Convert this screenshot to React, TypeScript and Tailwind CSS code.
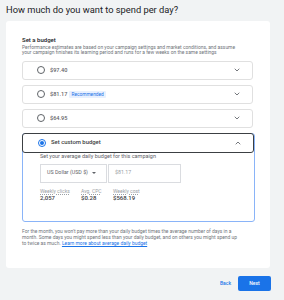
import React from "react";

const options = [
  { price: "$97.40", recommended: false },
  { price: "$81.17", recommended: true },
  { price: "$64.95", recommended: false },
];

function Chevron({ up }: { up?: boolean }) {
  return (
    <svg width="8" height="8" viewBox="0 0 24 24" className="text-[#5f6368]">
      <path
        d={up ? "M6 15l6-6 6 6" : "M6 9l6 6 6-6"}
        fill="none"
        stroke="currentColor"
        strokeWidth="2.6"
        strokeLinecap="round"
        strokeLinejoin="round"
      />
    </svg>
  );
}

export default function App() {
  return (
    <div
      className="w-[284px] h-[300px] bg-[#f1f3f4] overflow-hidden text-[#202124]"
      style={{ fontFamily: "Roboto, 'Liberation Sans', sans-serif" }}
    >
      <div className="pl-[6px] pt-[3px] h-[21px] text-[9.3px] leading-[14px] text-[#202124]">
        How much do you want to spend per day?
      </div>

      <div className="ml-[6px] w-[264px] h-[247px] bg-white rounded-[3px] pl-[16px] pr-[17px] pt-[15px]">
        <div className="text-[6px] leading-[8px] font-medium text-[#202124]">Set a budget</div>
        <p className="text-[4.95px] leading-[5.4px] text-[#70757a] mt-[1px] whitespace-nowrap">
          Performance estimates are based on your campaign settings and market conditions, and assume
          <br />
          your campaign finishes its learning period and runs for a few weeks on the same settings
        </p>

        {/* fixed options */}
        <div className="flex flex-col gap-[5px] mt-[5px]">
          {options.map((o) => (
            <div
              key={o.price}
              className="h-[19px] border border-[#e0e0e0] rounded-[3px] flex items-center pl-[14px] pr-[11px]"
            >
              <span className="w-[8px] h-[8px] rounded-full border border-[#5f6368]" />
              <span className="ml-[5px] text-[5.6px] font-medium text-[#5f6368]">{o.price}</span>
              {o.recommended && (
                <span className="ml-[2px] px-[2px] h-[7px] leading-[7px] bg-[#e8f0fe] text-[#1a73e8] text-[4.8px] rounded-[1px]">
                  Recommended
                </span>
              )}
              <span className="ml-auto">
                <Chevron />
              </span>
            </div>
          ))}
        </div>

        {/* custom budget */}
        <div className="mt-[5px] w-[233px] h-[89px] border border-[#8ab4f8] rounded-[3px]">
          <div className="-m-px h-[20px] w-[232px] border border-[#3c4043] rounded-[3px] flex items-center pl-[15px] pr-[11px] bg-white">
            <span className="w-[8px] h-[8px] rounded-full border border-[#1a73e8] flex items-center justify-center">
              <span className="w-[4px] h-[4px] rounded-full bg-[#1a73e8]" />
            </span>
            <span className="ml-[5px] text-[5.9px] font-medium text-[#3c4043]">Set custom budget</span>
            <span className="ml-auto">
              <Chevron up />
            </span>
          </div>

          <div className="pl-[17px] pt-[1px]">
            <div className="text-[5.5px] leading-[7px] text-[#5f6368]">
              Set your average daily budget for this campaign
            </div>
            <div className="flex gap-[1px] mt-[4px]">
              <div className="w-[67px] h-[19px] border border-[#dadce0] flex items-center pl-[6px] text-[5.3px] text-[#5f6368]">
                US Dollar (USD $)
                <span className="ml-[4px] w-0 h-0 border-l-[2px] border-r-[2px] border-t-[2.5px] border-l-transparent border-r-transparent border-t-[#5f6368]" />
              </div>
              <div className="w-[73px] h-[19px] border border-[#dadce0] flex items-center pl-[6px] text-[5.3px] text-[#9aa0a6]">
                $81.17
              </div>
            </div>
            <div className="flex mt-[5px]">
              {[
                ["Weekly clicks", "2,057", "w-[41px]"],
                ["Avg. CPC", "$0.28", "w-[32px]"],
                ["Weekly cost", "$568.19", "w-[40px]"],
              ].map(([l, v, w]) => (
                <div key={l} className={w}>
                  <div className="text-[5px] leading-[6px] text-[#9aa0a6] underline decoration-dotted">{l}</div>
                  <div className="text-[6px] leading-[7px] font-medium text-[#3c4043]">{v}</div>
                </div>
              ))}
            </div>
          </div>
        </div>

        <p className="mt-[6px] text-[4.95px] leading-[6.3px] text-[#70757a] whitespace-nowrap">
          For the month, you won't pay more than your daily budget times the average number of days in a
          <br />
          month. Some days you might spend less than your daily budget, and on others you might spend up
          <br />
          to twice as much.{" "}
          <span className="text-[#1a73e8] underline">Learn more about average daily budget</span>
        </p>
      </div>

      <div className="flex justify-end items-center gap-[7px] pr-[13px] mt-[8px]">
        <span className="text-[5px] font-medium text-[#1a73e8]">Back</span>
        <button className="w-[33px] h-[15px] rounded-[2px] bg-[#1a73e8] text-white text-[5px] font-medium">
          Next
        </button>
      </div>
    </div>
  );
}
